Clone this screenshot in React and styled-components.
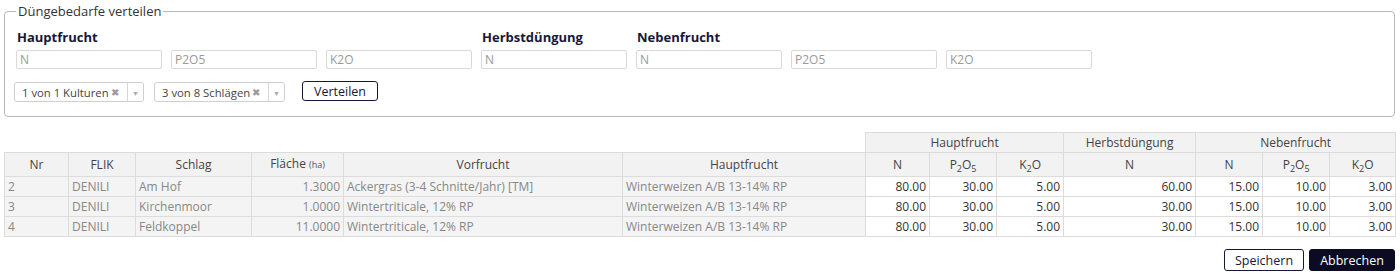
import React from "react";
import styled, { createGlobalStyle } from "styled-components";

const Global = createGlobalStyle`
  html, body { margin: 0; padding: 0; background: #fff; }
  body { font-family: "Open Sans", "Liberation Sans", sans-serif; font-size: 12px; color: #333; }
  * { box-sizing: border-box; }
`;

const Page = styled.div`
  padding: 4px 5px 0 4px;
`;

const Fieldset = styled.fieldset`
  margin: 0;
  border: 1px solid #b8b8b8;
  border-radius: 4px;
  padding: 7px 11px 14px 11px;
  height: 113px;
`;

const Legend = styled.legend`
  font-size: 13px;
  color: #333;
  padding: 0 2px;
  margin-left: 0;
  line-height: 14px;
`;

const FieldGrid = styled.div`
  display: grid;
  grid-template-columns: repeat(7, 146px);
  column-gap: 9px;
  row-gap: 4px;
`;

const GroupLabel = styled.div`
  grid-column: ${(p) => p.$col} / span ${(p) => p.$span};
  font-weight: 700;
  font-size: 13px;
  color: #17173a;
  line-height: 18px;
  padding-left: 1px;
  margin-top: 3px;
`;

const Input = styled.input`
  height: 19px;
  border: 1px solid #d9d9d9;
  border-radius: 2px;
  font-family: inherit;
  font-size: 12px;
  padding: 0 3px;
  color: #333;
  &::placeholder { color: #9a9a9a; }
`;

const Controls = styled.div`
  display: flex;
  align-items: center;
  margin-top: 11px;
  margin-left: -2px;
  gap: 10px;
`;

const Select = styled.div`
  display: flex;
  align-items: stretch;
  width: ${(p) => p.$w}px;
  height: 20px;
  border: 1px solid #cfcfcf;
  border-radius: 3px;
  background: #fff;
  color: #444;
  font-size: 11.3px;
  margin-top: 2px;
`;

const SelectValue = styled.div`
  flex: 1;
  display: flex;
  align-items: center;
  justify-content: space-between;
  padding: 0 8px 0 7px;
  white-space: nowrap;
`;

const Clear = styled.span`
  color: #999;
  font-size: 10px;
`;

const Arrow = styled.div`
  width: 16px;
  border-left: 1px solid #d6d6d6;
  display: flex;
  align-items: center;
  justify-content: center;
  color: #aaa;
  font-size: 7px;
  padding-top: 2px;
`;

const OutlineButton = styled.button`
  font-family: inherit;
  font-size: 12.5px;
  color: #17173a;
  background: #fff;
  border: 1px solid #17173a;
  border-radius: 3px;
  height: ${(p) => p.$h || 20}px;
  width: ${(p) => p.$w}px;
  padding: 0;
  margin-left: ${(p) => p.$ml || 0}px;
  cursor: pointer;
`;

const DarkButton = styled(OutlineButton)`
  background: #0b0b24;
  color: #fff;
  border-color: #0b0b24;
`;

const Table = styled.table`
  margin-top: 15px;
  border-collapse: collapse;
  table-layout: fixed;
  width: 1391px;
  font-size: 12px;
`;

const Th = styled.th`
  font-weight: 400;
  color: #444;
  background: ${(p) => (p.$blank ? "transparent" : "#f2f2f2")};
  border: ${(p) => (p.$blank ? "none" : "1px solid #dcdcdc")};
  height: ${(p) => p.$h || 20}px;
  padding: 0 4px;
  text-align: center;
  white-space: nowrap;
  line-height: 14px;
  sub { font-size: 9px; vertical-align: -3px; line-height: 0; }
`;

const Unit = styled.span`
  font-size: 9px;
  color: #555;
`;

const Td = styled.td`
  border: 1px solid #dcdcdc;
  height: 20px;
  padding: 0 3px;
  white-space: nowrap;
  overflow: hidden;
  background: ${(p) => (p.$ro ? "#f4f4f4" : "#fff")};
  color: ${(p) => (p.$ro ? "#888" : "#333")};
  text-align: ${(p) => (p.$right ? "right" : "left")};
`;

const Footer = styled.div`
  display: flex;
  justify-content: flex-end;
  gap: 5px;
  margin-top: 12px;
`;

const cols = [64, 67, 116, 92, 279, 243, 64, 67, 67, 132, 67, 67, 66];

const rows = [
  { nr: "2", schlag: "Am Hof", flaeche: "1.3000", vor: "Ackergras (3-4 Schnitte/Jahr) [TM]", hn: "60.00" },
  { nr: "3", schlag: "Kirchenmoor", flaeche: "1.0000", vor: "Wintertriticale, 12% RP", hn: "30.00" },
  { nr: "4", schlag: "Feldkoppel", flaeche: "11.0000", vor: "Wintertriticale, 12% RP", hn: "30.00" },
];

const P2O5 = () => (<>P<sub>2</sub>O<sub>5</sub></>);
const K2O = () => (<>K<sub>2</sub>O</>);

export default function App() {
  return (
    <>
      <Global />
      <Page>
        <Fieldset>
          <Legend>Düngebedarfe verteilen</Legend>
          <FieldGrid>
            <GroupLabel $col={1} $span={3}>Hauptfrucht</GroupLabel>
            <GroupLabel $col={4} $span={1}>Herbstdüngung</GroupLabel>
            <GroupLabel $col={5} $span={3}>Nebenfrucht</GroupLabel>
            <Input placeholder="N" />
            <Input placeholder="P2O5" />
            <Input placeholder="K2O" />
            <Input placeholder="N" />
            <Input placeholder="N" />
            <Input placeholder="P2O5" />
            <Input placeholder="K2O" />
          </FieldGrid>
          <Controls>
            <Select $w={130}>
              <SelectValue>1 von 1 Kulturen <Clear>✖</Clear></SelectValue>
              <Arrow>▼</Arrow>
            </Select>
            <Select $w={131}>
              <SelectValue>3 von 8 Schlägen <Clear>✖</Clear></SelectValue>
              <Arrow>▼</Arrow>
            </Select>
            <OutlineButton $ml={7} $w={76}>Verteilen</OutlineButton>
          </Controls>
        </Fieldset>

        <Table>
          <colgroup>
            {cols.map((w, i) => <col key={i} style={{ width: w }} />)}
          </colgroup>
          <thead>
            <tr>
              <Th $blank colSpan={6} />
              <Th colSpan={3}>Hauptfrucht</Th>
              <Th>Herbstdüngung</Th>
              <Th colSpan={3}>Nebenfrucht</Th>
            </tr>
            <tr>
              <Th $h={24}>Nr</Th>
              <Th $h={24}>FLIK</Th>
              <Th $h={24}>Schlag</Th>
              <Th $h={24}>Fläche <Unit>(ha)</Unit></Th>
              <Th $h={24}>Vorfrucht</Th>
              <Th $h={24}>Hauptfrucht</Th>
              <Th $h={24}>N</Th>
              <Th $h={24}><P2O5 /></Th>
              <Th $h={24}><K2O /></Th>
              <Th $h={24}>N</Th>
              <Th $h={24}>N</Th>
              <Th $h={24}><P2O5 /></Th>
              <Th $h={24}><K2O /></Th>
            </tr>
          </thead>
          <tbody>
            {rows.map((r) => (
              <tr key={r.nr}>
                <Td $ro>{r.nr}</Td>
                <Td $ro>DENILI</Td>
                <Td $ro>{r.schlag}</Td>
                <Td $ro $right>{r.flaeche}</Td>
                <Td $ro>{r.vor}</Td>
                <Td $ro>Winterweizen A/B 13-14% RP</Td>
                <Td $right>80.00</Td>
                <Td $right>30.00</Td>
                <Td $right>5.00</Td>
                <Td $right>{r.hn}</Td>
                <Td $right>15.00</Td>
                <Td $right>10.00</Td>
                <Td $right>3.00</Td>
              </tr>
            ))}
          </tbody>
        </Table>

        <Footer>
          <OutlineButton $h={22} $w={80}>Speichern</OutlineButton>
          <DarkButton $h={22} $w={86}>Abbrechen</DarkButton>
        </Footer>
      </Page>
    </>
  );
}
